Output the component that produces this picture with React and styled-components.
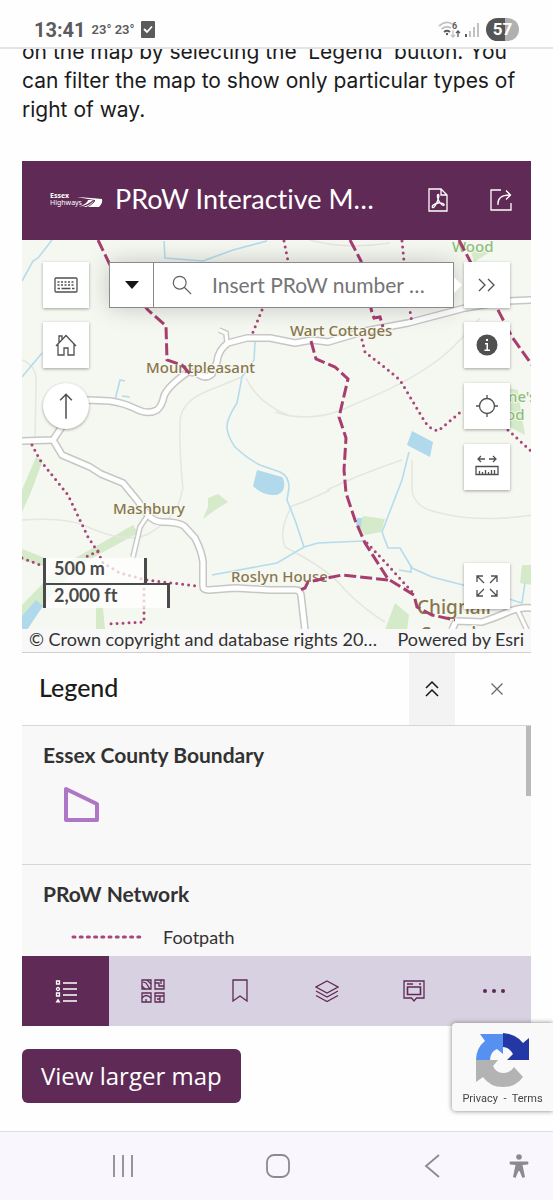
import React from 'react';
import styled, { createGlobalStyle } from 'styled-components';

const PURPLE = '#5f2a55';
const LILAC = '#d8d1e2';

const GlobalStyle = createGlobalStyle`
  * {
    box-sizing: border-box;
  }
  body {
    margin: 0;
    background: #fefefe;
    font-family: Lato, "Liberation Sans", sans-serif;
    font-variant-ligatures: none;
    color: #1b1b1b;
  }
  button, input {
    font: inherit;
  }
`;

const Page = styled.div`
  display: flex;
  flex-direction: column;
  min-height: 100vh;
`;

const StatusBar = styled.header`
  display: flex;
  align-items: center;
  gap: 6px;
  height: 49px;
  padding: 12px 34px 0;
  border-bottom: 2px solid #e4e4e4;
  color: #5b5b5b;
  font-family: Roboto, sans-serif;
  font-weight: 700;
`;

const Clock = styled.span`
  font-size: 20px;
  line-height: 24px;
`;

const Weather = styled.span`
  font-size: 13px;
  font-weight: 600;
  white-space: pre;
`;

const StatusRight = styled.div`
  display: flex;
  align-items: center;
  gap: 6px;
  margin-left: auto;
`;

const Battery = styled.span`
  width: 33px;
  height: 23px;
  border-radius: 12px;
  background: linear-gradient(90deg, #555 57%, #b0b0b0 57%);
  color: #fff;
  font-size: 17px;
  line-height: 23px;
  text-align: center;
`;

const Main = styled.main`
  flex: 1;
  padding: 0 22px 28px;
  overflow: hidden;
`;

const Intro = styled.p`
  margin: -12px -12px 37px 0;
  font-family: Inter, sans-serif;
  font-size: 21px;
  line-height: 29px;
`;

const MapApp = styled.section`
  display: flex;
  flex-direction: column;
`;

const AppHeader = styled.div`
  display: flex;
  align-items: center;
  height: 79px;
  padding: 0 18px 2px 28px;
  background: ${PURPLE};
  color: #fff;
`;

const AppTitle = styled.h1`
  flex: 1;
  margin: 0 0 0 12px;
  padding-bottom: 2px;
  font-size: 27px;
  font-weight: 400;
  line-height: 32px;
  white-space: nowrap;
`;

const HeaderButton = styled.button`
  display: flex;
  padding: 0;
  margin-left: 39px;
  border: 0;
  background: none;
  color: #fff;
`;

const MapView = styled.div`
  position: relative;
  height: 389px;
  overflow: hidden;
  background: #f5f7f1;
`;

const BaseMap = styled.svg`
  display: block;
  width: 100%;
  height: 100%;
  font-family: "Noto Sans", sans-serif;
  font-weight: 500;
`;

const Overlay = styled.div`
  position: absolute;
  inset: 0;
  display: flex;
  flex-direction: column;
  gap: 14px;
  padding: 22px 21px 20px;
`;

const TopRow = styled.div`
  display: flex;
`;

const Columns = styled.div`
  display: flex;
  flex: 1;
  justify-content: space-between;
`;

const Stack = styled.div`
  display: flex;
  flex-direction: column;
  align-items: flex-start;
  gap: 15px;
`;

const MapButton = styled.button`
  display: flex;
  flex: none;
  align-items: center;
  justify-content: center;
  width: 46px;
  height: 46px;
  padding: 0;
  margin-top: ${(props) => (props.$last ? 'auto' : 0)};
  border: 0;
  border-radius: ${(props) => (props.$round ? '50%' : 0)};
  background: #fff;
  color: #505050;
  box-shadow: 0 1px 3px rgba(0, 0, 0, 0.35);
`;

const SearchBox = styled.div`
  display: flex;
  flex: 1;
  min-width: 0;
  height: 46px;
  margin-left: 20px;
  border: 1px solid #8a8a8a;
  background: #fff;
  box-shadow: 0 0 24px rgba(0, 0, 0, 0.2);
`;

const SourceButton = styled.button`
  display: flex;
  flex: none;
  align-items: center;
  justify-content: center;
  width: 44px;
  padding: 0;
  border: 0;
  border-right: 1px solid #8a8a8a;
  background: #fff;
`;

const SearchLabel = styled.label`
  display: flex;
  flex: 1;
  align-items: center;
  gap: 19px;
  min-width: 0;
  padding-left: 17px;
  color: #5f5f5f;
  svg {
    flex: none;
  }
`;

const SearchInput = styled.input`
  flex: 1;
  min-width: 0;
  padding: 0 0 2px;
  border: 0;
  outline: 0;
  background: none;
  font-size: 21px;
  &::placeholder {
    color: #757575;
    opacity: 1;
  }
`;

const Pointer = styled.svg`
  flex: none;
  align-self: center;
`;

const ScaleBar = styled.div`
  margin-top: auto;
  margin-bottom: 1px;
  color: #4a4a4a;
  font-size: 18px;
  font-weight: 700;
  line-height: 20px;
`;

const ScaleRow = styled.div`
  width: ${(props) => props.$width}px;
  height: 25px;
  padding-left: 8px;
  border: solid #4a4a4a;
  border-width: ${(props) => (props.$metric ? '0 3px 0 3px' : '2px 3px 0 3px')};
  background: rgba(255, 255, 255, 0.75);
`;

const Attribution = styled.div`
  display: flex;
  justify-content: space-between;
  height: 24px;
  padding: 0 7px;
  border-bottom: 1px solid #cfcfcf;
  background: #f8f8f8;
  color: #323232;
  font-size: 18px;
  line-height: 20px;
  white-space: nowrap;
`;

const PanelHeader = styled.div`
  display: flex;
  align-items: center;
  height: 73px;
  padding-left: 17px;
  border-bottom: 1px solid #d6d6d6;
`;

const PanelTitle = styled.h2`
  flex: 1;
  margin: 0;
  padding-bottom: 5px;
  font-size: 25px;
  font-weight: 500;
  line-height: 28px;
`;

const PanelButton = styled.button`
  display: flex;
  align-items: center;
  justify-content: center;
  align-self: stretch;
  width: ${(props) => (props.$wide ? 76 : 46)}px;
  padding: 0 0 0 ${(props) => (props.$wide ? 8 : 0)}px;
  border: 0;
  background: ${(props) => (props.$active ? '#f3f3f3' : 'transparent')};
  color: ${(props) => (props.$active ? '#151515' : '#6a6a6a')};
`;

const PanelBody = styled.div`
  position: relative;
  height: 230px;
  overflow: hidden;
  background: #f8f8f8;
`;

const ScrollThumb = styled.div`
  position: absolute;
  top: 0;
  right: 0;
  width: 5px;
  height: 70px;
  background: #b9b9b9;
`;

const LegendGroup = styled.section`
  height: 139px;
  padding: 15px 21px 0;
  border-bottom: 1px solid #d6d6d6;
`;

const GroupTitle = styled.h3`
  margin: 0;
  color: #323232;
  font-size: 21px;
  font-weight: 700;
  line-height: 28px;
`;

const BoundarySymbol = styled.svg`
  display: block;
  margin: 17px 0 0 20px;
`;

const LegendRow = styled.div`
  display: flex;
  align-items: center;
  gap: 21px;
  padding: 17px 0 0 28px;
  color: #323232;
  font-size: 18px;
  line-height: 24px;
`;

const Toolbar = styled.nav`
  display: flex;
  background: ${LILAC};
`;

const Tool = styled.button`
  display: flex;
  flex: ${(props) => (props.$last ? '1' : '0 0 87px')};
  align-items: center;
  justify-content: center;
  height: 70px;
  padding: 0;
  border: 0;
  background: ${(props) => (props.$active ? PURPLE : LILAC)};
  color: ${(props) => (props.$active ? '#fff' : PURPLE)};
`;

const LargerMap = styled.a`
  display: inline-block;
  margin-top: 23px;
  padding: 12px 19px;
  border-radius: 6px;
  background: ${PURPLE};
  color: #fff;
  font-family: "Open Sans", sans-serif;
  font-size: 24px;
  font-weight: 500;
  line-height: 30px;
  text-decoration: none;
`;

const Recaptcha = styled.aside`
  position: fixed;
  right: 0;
  bottom: 89px;
  display: flex;
  flex-direction: column;
  align-items: center;
  width: 101px;
  height: 88px;
  padding-top: 10px;
  border-radius: 4px 0 0 4px;
  background: #f9f9f9;
  box-shadow: 0 0 5px #808080;
`;

const RecaptchaLinks = styled.div`
  margin-top: 3px;
  color: #444;
  font-family: Roboto, sans-serif;
  font-size: 11px;
  line-height: 16px;
  white-space: pre;
  a {
    color: inherit;
    text-decoration: none;
  }
`;

const NavBar = styled.footer`
  display: flex;
  align-items: center;
  justify-content: space-between;
  height: 69px;
  padding: 0 22px 0 111px;
  border-top: 1px solid #dfdde6;
  background: #f9f7fd;
`;

const NavButton = styled.button`
  display: flex;
  padding: 0;
  border: 0;
  background: none;
  color: #8b8a90;
`;

const NavEnd = styled.div`
  display: flex;
  align-items: center;
  gap: 63px;
`;

function Icon({ size = 24, children, ...rest }) {
  return (
    <svg
      width={size}
      height={size}
      viewBox="0 0 24 24"
      fill="none"
      stroke="currentColor"
      strokeWidth="1.3"
      aria-hidden="true"
      {...rest}
    >
      {children}
    </svg>
  );
}

const roads = [
  'M22 441 L53 440 L61 428 L75 408 L88 400 L110 401 Q124 403 136 409 Q148 415 157 410 Q162 406 164 396 Q168 386 188 372 L197 373 Q205 380 212 374 L217 362 Q218 350 228 343 L247 338 L270 338 L295 343 L312 340 L328 342 L365 331 L408 323 L465 308 L508 301 L532 300',
  'M53 440 L62 455 L90 467 L101 474 L123 483 L137 500 L148 515 Q154 522 163 522 Q178 522 184 526 L195 538 Q202 552 203 562 L203 586 Q203 590 209 590 L235 588 L270 590 L296 590 Q300 590 301 595 L305 630',
  'M452 630 L456 621 L482 622 Q497 617 508 612 Q520 607 532 608',
];
const lanes = ['M148 515 L140 527 L133 557', 'M518 611 L527 630', 'M227 343 L226 333 L219 330'];

const streams = [
  'M22 281 L33 261 L38 258 L52 240',
  'M164 241 L165 258 L203 261 L233 250 L267 241',
  'M22 377 L42 353',
  'M255 342 L254 360 L242 377 L237 403 Q226 420 227 428 Q228 437 235 447 Q248 459 260 465 L280 472 Q289 476 289 488 L287 500 L295 520 L304 547',
  'M212 575 L277 563 L304 547 L318 543 L363 541',
  'M409 452 L402 480 L382 532 L388 548 L400 548 L412 568 L432 577 L463 585 L522 603 L525 583',
  'M399 570 L411 572 L411 565',
  'M115 400 L120 380 L125 381 M122 396 L130 397',
];

const contours = [
  'M242 377 L205 392 Q182 402 180 420 Q179 450 183 490',
  'M275 412 Q315 425 355 404 Q420 378 450 350 Q470 330 480 318',
  'M412 460 L412 490 Q414 508 440 513 Q480 523 532 515',
  'M246 378 Q258 404 290 416',
  'M22 360 Q38 366 36 385 L35 440',
  'M327 490 Q360 474 402 460',
  'M330 490 Q305 502 292 506 Q278 530 285 547 Q330 570 345 590 Q365 610 385 622',
  'M22 520 Q70 517 90 528 Q130 545 150 533 Q180 515 182 490',
  'M310 240 Q345 250 390 243',
];

const bridleways = [
  'M98 240 L110 265 L148 310 L166 326 L167 360 L182 365 L190 374',
  'M350 240 L361 261 L372 313 L374 318 L380 317 L383 327',
  'M459 240 L470 261 L497 308 L512 337 L532 365',
  'M311 341 L316 359 L335 367 L348 379 L339 417 L346 438 L344 470 L346 493 L355 520 L365 543 L388 579 L414 595 L417 607 L432 615 L455 620',
  'M388 580 L342 575 L308 582 L305 588 L300 590',
];

const footpaths = [
  'M32 445 L40 460 L68 495 L88 537 L98 552 L103 563 L120 573 L146 580 L197 586',
  'M98 551 L86 557',
  'M22 558 L43 566',
  'M144 583 L144 622 L107 624',
  'M362 340 L365 352 L388 370 L400 380 L425 422 Q430 429 438 431 L463 410',
  'M508 430 L532 452',
  'M284 241 L288 261',
  'M402 241 L404 261 L410 311 L412 323',
  'M262 310 L251 337',
  'M367 543 L385 562 L413 593',
];

const places = [
  { name: 'Wart Cottages', x: 290, y: 336, size: 15 },
  { name: 'Mountpleasant', x: 146, y: 373, size: 15 },
  { name: 'Mashbury', x: 113, y: 514, size: 15 },
  { name: 'Roslyn House', x: 231, y: 582, size: 15 },
  { name: 'Chignall', x: 417, y: 614, size: 19 },
  { name: 'Smealy', x: 421, y: 641, size: 19 },
  { name: 'Wood', x: 452, y: 252, size: 15, wood: true },
  { name: "ne's", x: 508, y: 402, size: 15, wood: true },
  { name: 'od', x: 506, y: 420, size: 15, wood: true },
];

function Lines({ paths, ...rest }) {
  return (
    <g fill="none" {...rest}>
      {paths.map((d) => (
        <path key={d} d={d} />
      ))}
    </g>
  );
}

function CountyMap() {
  return (
    <BaseMap viewBox="22 240 509 389" preserveAspectRatio="xMidYMid slice" role="img" aria-label="Rights of way map">
      <g fill="#d5eac9">
        <path d="M36 457 L43 460 L31 492 L22 512 L22 490 Z" />
        <path d="M22 549 L45 558 L43 566 L22 560 Z" />
        <path d="M133 525 L138 533 L76 567 L40 609 L22 624 L22 605 L58 568 Z" />
        <path d="M208 498 L218 494 L228 502 L215 510 L203 519 L208 507 Z" />
        <path d="M363 516 L385 519 L381 532 L365 535 L358 526 Z" />
        <path d="M395 603 L409 615 L407 630 L385 630 Z" />
        <path d="M522 565 L532 565 L532 585 L520 583 Z" />
        <path d="M470 248 L490 252 L474 262 Z" />
        <path d="M508 388 L518 390 L521 412 L525 435 L508 426 Z" />
        <path d="M96 605 L103 608 L105 630 L96 630 Z" />
      </g>
      <Lines paths={contours} stroke="#e5e6e0" strokeWidth="1.5" />
      <Lines paths={streams} stroke="#b5dcec" strokeWidth="1.6" />
      <g fill="#b0d9ec">
        <path d="M257 470 L282 477 Q285 480 284 488 Q281 496 272 495 Q261 494 253 486 Z" />
        <path d="M412 431 L433 442 L430 457 L407 445 Z" />
        <path d="M357 518 L362 518 L361 528 L356 525 Z" />
        <path d="M22 616 L36 600 L43 606 L27 630 L22 630 Z" />
      </g>
      <Lines paths={lanes} stroke="#cbcbca" strokeWidth="6" />
      <Lines paths={roads} stroke="#c6c6c4" strokeWidth="8" strokeLinejoin="round" />
      <Lines paths={lanes} stroke="#fff" strokeWidth="3" />
      <Lines paths={roads} stroke="#fff" strokeWidth="5" strokeLinejoin="round" />
      {places.map((place) => (
        <text
          key={place.name}
          x={place.x}
          y={place.y}
          fontSize={place.size}
          fill={place.wood ? '#8abf7d' : '#86774c'}
          stroke="#f8f8f1"
          strokeWidth="2"
          paintOrder="stroke"
        >
          {place.name}
        </text>
      ))}
      <Lines paths={bridleways} stroke="#a83d70" strokeWidth="3" strokeDasharray="12 4" />
      <Lines paths={footpaths} stroke="#a8457a" strokeWidth="3" strokeDasharray="0 6" strokeLinecap="round" />
    </BaseMap>
  );
}

function Logo() {
  return (
    <svg width="53" height="20" viewBox="0 0 53 20" fill="#fff" fontFamily="Noto Sans, sans-serif" fontSize="7">
      <text x="0" y="8" fontWeight="700">Essex</text>
      <text x="0" y="15">Highways</text>
      <path d="M27 7 Q42 8 52 9 Q53 13 49 17 L38 17 Q46 12 45 10 Q38 9 27 7 Z" />
      <path d="M29 17 Q38 15 43 10 L38 10 Q38 13 29 17 Z" />
      <path d="M33 17 Q41 15 44 10 Q43 14 36 17 Z" />
    </svg>
  );
}

function RecaptchaLogo() {
  return (
    <svg width="54" height="55" viewBox="0 0 54 55" aria-label="reCAPTCHA" role="img">
      <path d="M27 0 Q40 1 47 10 L53 5 V27 H31 L37 21 Q33 14 27 14 Z" fill="#2338a5" />
      <path d="M0 27 Q0 15 9 8 L4 1 H27 V21 L21 16 Q14 19 14 27 Z" fill="#5690f0" />
      <path d="M0 27 H22 L17 33 Q20 40 27 40 Q34 40 38 34 L47 44 Q40 54 27 54 Q14 54 7 44 L0 49 Z" fill="#b3b3b3" />
    </svg>
  );
}

function App() {
  return (
    <Page>
      <GlobalStyle />
      <StatusBar>
        <Clock>13:41</Clock>
        <Weather>23° 23°</Weather>
        <svg width="14" height="17" viewBox="0 0 14 17">
          <rect width="14" height="17" rx="1" fill="#5b5b5b" />
          <path d="M3 8 L6 11 L11 5.500" fill="none" stroke="#fff" strokeWidth="1.8" />
        </svg>
        <StatusRight>
          <svg width="42" height="18" viewBox="0 0 42 18" fill="none" stroke="#c2c2c2" strokeWidth="1.8">
            <path d="M1 5 Q8 -1 14 3 M3.500 8 Q8 4 13 7" />
            <path d="M6 11 Q9 8.500 12 11" stroke="#5b5b5b" />
            <circle cx="9" cy="13" r="1.200" fill="#5b5b5b" stroke="none" />
            <path d="M15 9 V16 M13 14 L15 16 L17 14" strokeWidth="1.300" />
            <path d="M20 16 V10 M18 12 L20 10 L22 12" stroke="#5b5b5b" strokeWidth="1.300" />
            <text x="14" y="8" fill="#5b5b5b" stroke="none" fontSize="9">6</text>
            <path d="M28 16 V13" stroke="#5b5b5b" strokeWidth="2" />
            <path d="M32 16 V10 M36 16 V6 M40 16 V2" strokeWidth="2" />
          </svg>
          <Battery>57</Battery>
        </StatusRight>
      </StatusBar>

      <Main>
        <Intro>
          on the map by selecting the ‘Legend’ button. You can filter the map to show only particular types of right
          of way.
        </Intro>

        <MapApp>
          <AppHeader>
            <Logo />
            <AppTitle>PRoW Interactive M…</AppTitle>
            <HeaderButton aria-label="PDF guide">
              <Icon>
                <path d="M3 1 H15 L21 7 V23 H3 Z M15 1 V7 H21" />
                <path d="M6.500 19.500 C5 18 9 15.500 12 15 C15 14.500 19 15.500 18 17.200 C17 18.500 13 14.500 12 11 C11 8 11.200 6.500 12.200 6.500 C13.700 6.500 12.500 11 11 14 C9.500 17.500 7.800 20.500 6.500 19.500 Z" />
              </Icon>
            </HeaderButton>
            <HeaderButton aria-label="Share">
              <Icon>
                <path d="M12 2 H2 V22 H22 V15" />
                <path d="M9 17 Q8 7 21 7 M17 2.500 L21.500 7 L17 11.500" />
              </Icon>
            </HeaderButton>
          </AppHeader>

          <MapView>
            <CountyMap />
            <Overlay>
              <TopRow>
                <MapButton aria-label="Keyboard shortcuts">
                  <Icon>
                    <rect x="1" y="5" width="22" height="14" rx="1" />
                    <path d="M3.500 9 H20.500 M3.500 12 H20.500" strokeDasharray="2 1.500" />
                    <path d="M3.500 15.500 H6 M7.500 15.500 H16.500 M18 15.500 H20.500" />
                  </Icon>
                </MapButton>
                <SearchBox>
                  <SourceButton aria-label="Search in">
                    <svg width="14" height="8" viewBox="0 0 14 8">
                      <path d="M0 0 H14 L7 8 Z" fill="#151515" />
                    </svg>
                  </SourceButton>
                  <SearchLabel>
                    <Icon size={22}>
                      <circle cx="9.500" cy="9.500" r="7" />
                      <path d="M14.500 14.500 L22 22" />
                    </Icon>
                    <SearchInput type="text" placeholder="Insert PRoW number …" aria-label="Insert PRoW number" />
                  </SearchLabel>
                </SearchBox>
                <Pointer width="10" height="20" viewBox="0 0 10 20">
                  <path d="M0 2 L8 10 L0 18 Z" fill="#fff" />
                </Pointer>
                <MapButton aria-label="Collapse">
                  <Icon>
                    <path d="M4 6 L10 12 L4 18 M13 6 L19 12 L13 18" />
                  </Icon>
                </MapButton>
              </TopRow>
              <Columns>
                <Stack>
                  <MapButton aria-label="Default map view">
                    <Icon>
                      <path d="M2 13 L12 2.500 L22 13 M4 11.500 V22 H10 V15 H14 V22 H20 V11.500 M5 9.500 V3 H8 V6.500" />
                    </Icon>
                  </MapButton>
                  <MapButton aria-label="Reset north" $round>
                    <Icon size={28}>
                      <path d="M12 23 V2 M7 7 L12 2 L17 7" />
                    </Icon>
                  </MapButton>
                  <ScaleBar>
                    <ScaleRow $width={104} $metric>500 m</ScaleRow>
                    <ScaleRow $width={127}>2,000 ft</ScaleRow>
                  </ScaleBar>
                </Stack>
                <Stack>
                  <MapButton aria-label="Information">
                    <Icon stroke="none">
                      <circle cx="12" cy="12" r="10.500" fill="currentColor" />
                      <path d="M11 6 H13 V8 H11 Z M10 10 H13 V16.500 H15 V18 H9.500 V16.500 H11.500 V11.500 H10 Z" fill="#fff" />
                    </Icon>
                  </MapButton>
                  <MapButton aria-label="Find my location">
                    <Icon>
                      <circle cx="12" cy="12" r="7.500" />
                      <path d="M12 1 V4.500 M12 19.500 V23 M1 12 H4.500 M19.500 12 H23" />
                    </Icon>
                  </MapButton>
                  <MapButton aria-label="Measure">
                    <Icon>
                      <path d="M3 4 H10 M6 1 L3 4 L6 7 M14 4 H21 M18 1 L21 4 L18 7" />
                      <path d="M1 11.500 H23 V19.500 H1 Z M4.500 19.500 V16 M7.500 19.500 V17 M10.500 19.500 V15 M13.500 19.500 V17 M16.500 19.500 V15 M19.500 19.500 V15" />
                    </Icon>
                  </MapButton>
                  <MapButton aria-label="Full screen" $last>
                    <Icon>
                      <path d="M9 9 L2 2 M2 8 V2 H8 M15 9 L22 2 M16 2 H22 V8 M9 15 L2 22 M2 16 V22 H8 M15 15 L22 22 M16 22 H22 V16" />
                    </Icon>
                  </MapButton>
                </Stack>
              </Columns>
            </Overlay>
          </MapView>

          <Attribution>
            <span>© Crown copyright and database rights 20…</span>
            <span>Powered by Esri</span>
          </Attribution>

          <PanelHeader>
            <PanelTitle>Legend</PanelTitle>
            <PanelButton aria-label="Expand panel" $active>
              <Icon strokeWidth="1.500">
                <path d="M6 11 L12 5 L18 11 M6 19 L12 13 L18 19" />
              </Icon>
            </PanelButton>
            <PanelButton aria-label="Close" $wide>
              <Icon>
                <path d="M6.500 6.500 L17.500 17.500 M17.500 6.500 L6.500 17.500" />
              </Icon>
            </PanelButton>
          </PanelHeader>

          <PanelBody>
            <LegendGroup>
              <GroupTitle>Essex County Boundary</GroupTitle>
              <BoundarySymbol width="38" height="38" viewBox="0 0 38 38">
                <path d="M3 3 L34 18 V34 H3 Z" fill="none" stroke="#ae77c6" strokeWidth="4" strokeLinejoin="round" />
              </BoundarySymbol>
            </LegendGroup>
            <LegendGroup>
              <GroupTitle>PRoW Network</GroupTitle>
              <LegendRow>
                <svg width="71" height="4" viewBox="0 0 71 4">
                  <path d="M2 2 H70" stroke="#a8457a" strokeWidth="3" strokeDasharray="2 5.200" strokeLinecap="round" />
                </svg>
                Footpath
              </LegendRow>
            </LegendGroup>
            <ScrollThumb />
          </PanelBody>

          <Toolbar>
            <Tool aria-label="Legend" $active>
              <Icon>
                <path d="M9 4 H23 M9 10 H23 M9 16 H23 M9 22 H23" strokeWidth="1.500" />
                <path d="M2.500 2 H5.500 V5 H2.500 Z M2.500 14 H5.500 V17 H2.500 Z" />
                <circle cx="4" cy="10" r="1.500" />
                <path d="M4 19.500 L6.500 23.500 H1.500 Z" fill="currentColor" stroke="none" />
              </Icon>
            </Tool>
            <Tool aria-label="Basemap gallery">
              <Icon>
                <path d="M1 1 H10 V10 H1 Z M14 1 H23 V10 H14 Z M1 14 H10 V23 H1 Z M14 14 H23 V23 H14 Z" />
                <path d="M2 3 L5 4 L9 10 M6 1 L10 5 M1 7 L4 10 M14 4 H18 V7 H23 M20 1 V5 M1 19 Q5 14 10 19 M5 23 V20 M14 17 H23 M19 17 V23 M16 20 H19" />
              </Icon>
            </Tool>
            <Tool aria-label="Bookmarks">
              <Icon>
                <path d="M5 1 H19 V22 L12 17 L5 22 Z" />
              </Icon>
            </Tool>
            <Tool aria-label="Layers">
              <Icon>
                <path d="M12 2 L23 8 L12 14 L1 8 Z M1 12 L12 18 L23 12 M1 16.500 L12 22.500 L23 16.500" />
              </Icon>
            </Tool>
            <Tool aria-label="Pop-ups">
              <Icon>
                <path d="M2 2 H22 V19 H14.500 L12 22 L9.500 19 H2 Z" />
                <path d="M5 5 H11 M17 5 H19" />
                <path d="M5.500 8 H18.500 V15.500 H5.500 Z" strokeWidth="1.600" />
              </Icon>
            </Tool>
            <Tool aria-label="More" $last>
              <Icon fill="currentColor" stroke="none">
                <circle cx="3" cy="12" r="2" />
                <circle cx="12" cy="12" r="2" />
                <circle cx="21" cy="12" r="2" />
              </Icon>
            </Tool>
          </Toolbar>
        </MapApp>

        <LargerMap href="#map">View larger map</LargerMap>
      </Main>

      <Recaptcha>
        <RecaptchaLogo />
        <RecaptchaLinks>
          <a href="#privacy">Privacy</a>
          {'  -  '}
          <a href="#terms">Terms</a>
        </RecaptchaLinks>
      </Recaptcha>

      <NavBar>
        <NavButton aria-label="Recent apps">
          <Icon strokeWidth="1.800">
            <path d="M3 1 V23 M12 1 V23 M21 1 V23" />
          </Icon>
        </NavButton>
        <NavButton aria-label="Home">
          <Icon strokeWidth="1.800">
            <rect x="1" y="1" width="22" height="22" rx="7" />
          </Icon>
        </NavButton>
        <NavEnd>
          <NavButton aria-label="Back">
            <Icon strokeWidth="1.800">
              <path d="M19 1 L6 12 L19 23" />
            </Icon>
          </NavButton>
          <NavButton aria-label="Accessibility">
            <Icon fill="currentColor" stroke="none">
              <circle cx="12" cy="3" r="2.800" />
              <path d="M3 7.500 H21 Q22 9 21 10.500 L15.500 11 L18 23 L15.500 24 L12.500 17 H11.500 L8.500 24 L6 23 L8.500 11 L3 10.500 Q2 9 3 7.500 Z" />
            </Icon>
          </NavButton>
        </NavEnd>
      </NavBar>
    </Page>
  );
}

export default App;
